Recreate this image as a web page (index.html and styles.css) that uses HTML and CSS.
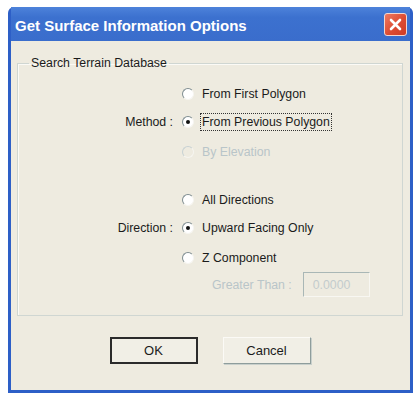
FILE: index.html
```html
<!DOCTYPE html>
<html lang="en">
<head>
    <meta charset="UTF-8">
    <title>Get Surface Information Options</title>
    <link rel="stylesheet" href="styles.css">
</head>
<body>
    <div class="window">
        <div class="titlebar">
            <span class="title">Get Surface Information Options</span>
            <span class="close">
                <svg width="13" height="13" viewBox="0 0 13 13">
                    <path d="M2 2 L11 11 M11 2 L2 11" stroke="#fff" stroke-width="2.6" stroke-linecap="round"/>
                </svg>
            </span>
        </div>
        <div class="client">
            <fieldset class="group">
                <legend>Search Terrain Database</legend>

                <div class="section">
                    <div class="row">
                        <span class="caption"></span>
                        <span class="radio"></span>
                        <span class="text">From First Polygon</span>
                    </div>
                    <div class="row">
                        <span class="caption">Method :</span>
                        <span class="radio checked"></span>
                        <span class="text focus">From Previous Polygon</span>
                    </div>
                    <div class="row far disabled">
                        <span class="caption"></span>
                        <span class="radio"></span>
                        <span class="text">By Elevation</span>
                    </div>
                </div>

                <div class="section second">
                    <div class="row">
                        <span class="caption"></span>
                        <span class="radio"></span>
                        <span class="text">All Directions</span>
                    </div>
                    <div class="row">
                        <span class="caption">Direction :</span>
                        <span class="radio checked"></span>
                        <span class="text">Upward Facing Only</span>
                    </div>
                    <div class="row far">
                        <span class="caption"></span>
                        <span class="radio"></span>
                        <span class="text">Z Component</span>
                    </div>
                </div>

                <div class="threshold disabled">
                    <span class="text">Greater Than :</span>
                    <span class="field">0.0000</span>
                </div>
            </fieldset>

            <div class="buttons">
                <button class="btn default">OK</button>
                <button class="btn">Cancel</button>
            </div>
        </div>
    </div>
</body>
</html>
```

FILE: styles.css
```css
body {
    margin: 0;
    background-color: #fff;
    font-family: "Liberation Sans", Arial, sans-serif;
    font-size: 12.3px;
    color: #1b1b1b;
}
.window {
    margin: 7px 0 0 8px;
    width: 399px;
    padding: 0 3px 3px 3px;
    background-color: #2d5fc7;
    border-radius: 6px 6px 0 0;
}
.titlebar {
    height: 34px;
    display: flex;
    align-items: center;
    justify-content: space-between;
    padding: 0 3px 0 4px;
    background: linear-gradient(#4d82da, #3c71cf 30%, #3a6dcc);
}
.title {
    color: #fff;
    font-weight: bold;
    font-size: 15px;
    padding-top: 3px;
}
.close {
    width: 21px;
    height: 21px;
    border: 1px solid #f3d6cf;
    border-radius: 3px;
    background: linear-gradient(135deg, #ee7a62, #dc4b32 55%, #cf3c25);
    display: flex;
    align-items: center;
    justify-content: center;
}
.client {
    box-sizing: border-box;
    background-color: #eeebe0;
    height: 349px;
    padding-top: 15px;
}
.group {
    margin: 0 7px 0 6px;
    padding: 0 0 18px 0;
    border: 1px solid #cfd6d2;
    box-shadow: inset 1px 1px 0 #fbfaf6;
}
.group legend {
    margin-left: 11px;
    padding: 0 2px;
    line-height: 14px;
}
.section {
    margin-top: 15px;
}
.section.second {
    margin-top: 30px;
}
.row {
    display: flex;
    align-items: center;
    height: 18px;
}
.row + .row {
    margin-top: 10px;
}
.row.far {
    margin-top: 12px;
}
.caption {
    width: 155px;
    margin-right: 9px;
    text-align: right;
}
.radio {
    width: 12px;
    height: 12px;
    margin-right: 8px;
    border-radius: 50%;
    background-color: #fff;
    border: 1px solid;
    border-color: #7f8d91 #f6f5f0 #f6f5f0 #7f8d91;
    box-sizing: border-box;
    display: flex;
    align-items: center;
    justify-content: center;
}
.radio.checked::after {
    content: "";
    width: 4px;
    height: 4px;
    border-radius: 50%;
    background-color: #111;
}
.text.focus {
    outline: 1px dotted #333;
    outline-offset: 1px;
}
.disabled .text {
    color: #b9c5c9;
}
.disabled .radio {
    background-color: #eeebe0;
    border-color: #c7d1d3 #f6f5f0 #f6f5f0 #c7d1d3;
}
.threshold {
    display: flex;
    align-items: center;
    margin-top: 5px;
    padding-left: 194px;
}
.threshold .text {
    margin-right: 11px;
}
.field {
    width: 67px;
    height: 25px;
    box-sizing: border-box;
    border: 1px solid;
    border-color: #a9b7b6 #f8f7f2 #f8f7f2 #a9b7b6;
    padding-left: 9px;
    display: flex;
    align-items: center;
    color: #c3cccd;
}
.buttons {
    display: flex;
    justify-content: center;
    gap: 25px;
    margin-top: 21px;
    padding-right: 1px;
}
.btn {
    width: 88px;
    height: 27px;
    font-family: "Liberation Sans", Arial, sans-serif;
    font-size: 13px;
    color: #1b1b1b;
    background-color: #f1efe6;
    border: 1px solid;
    border-color: #fbfaf6 #8e9d9c #8e9d9c #fbfaf6;
    box-shadow: 1px 1px 0 #c9d0cc;
}
.btn.default {
    border: 2px solid #2b2b2b;
    box-shadow: none;
}
```
